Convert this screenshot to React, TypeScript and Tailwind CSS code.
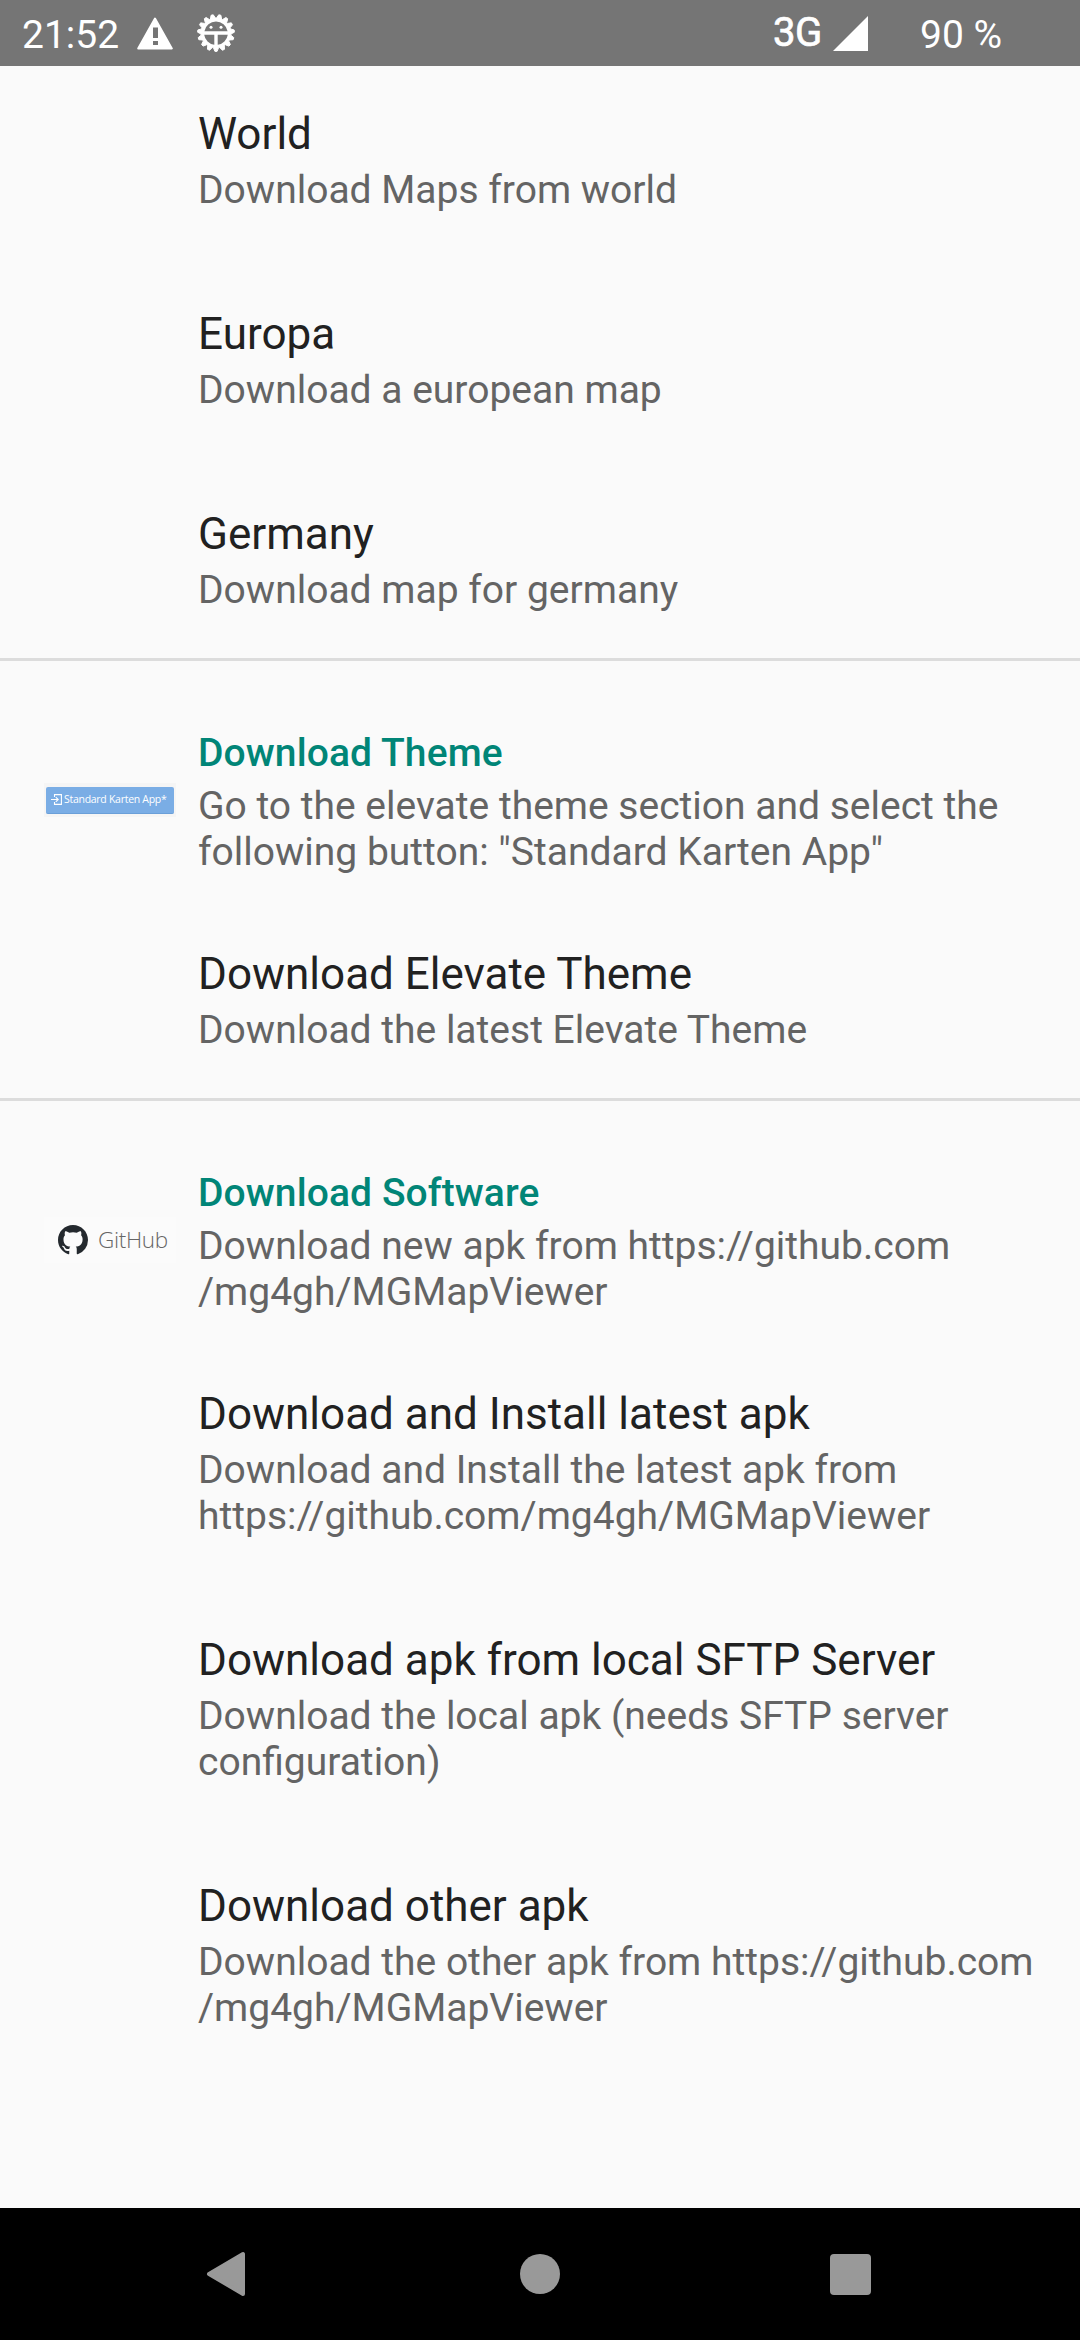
type Entry = { title: string; lines: string[] };

function Preference({ title, lines }: Entry) {
  return (
    <div className="pl-[198px]">
      <div className="h-[52px] whitespace-nowrap text-[44px] leading-[52px] text-[#212121]">{title}</div>
      <Summary lines={lines} />
    </div>
  );
}

function Summary({ lines }: { lines: string[] }) {
  return (
    <div className="mt-[7px] text-[39px] leading-[46px] text-[#646464]">
      {lines.map((l) => (
        <div key={l} className="h-[46px] whitespace-nowrap">{l}</div>
      ))}
    </div>
  );
}

function Header({ title, lines, children }: Entry & { children: React.ReactNode }) {
  return (
    <div className="mt-[69px] mb-[73px] flex h-[145px]">
      <div className="flex w-[198px] shrink-0 items-center pb-[5px] pl-[44px]">{children}</div>
      <div>
        <div className="h-[46px] whitespace-nowrap text-[39px] font-medium leading-[46px] tracking-[0.1px] text-[#018577]">{title}</div>
        <Summary lines={lines} />
      </div>
    </div>
  );
}

const Divider = () => <div className="mt-[45px] h-[3px] bg-[#dcdcdc]" />;

function Gear() {
  const pts: string[] = [];
  const n = 15;
  for (let i = 0; i < n; i++) {
    const a = Math.PI / 2 + (i * 2 * Math.PI) / n;
    const p = (r: number, d: number) => `${(20 + r * Math.cos(a + d)).toFixed(2)},${(20 + r * Math.sin(a + d)).toFixed(2)}`;
    pts.push(p(15, -0.17), p(18.4, -0.06), p(18.4, 0.06), p(15, 0.17));
  }
  return (
    <svg className="ml-[23px] size-[40px]" viewBox="0 0 40 40">
      <polygon points={pts.join(' ')} fill="#fff" stroke="#fff" strokeWidth="1" strokeLinejoin="round" />
      <path d="M8.4 18.2a11.8 11.8 0 0 1 23.2 0z" fill="#757575" />
      <path d="M8.2 21.7H18.3V31.8A11.9 11.9 0 0 1 8.2 21.7zM31.8 21.7H21.7V31.8A11.9 11.9 0 0 0 31.8 21.7z" fill="#757575" />
      <circle cx="15" cy="14.3" r="1.5" fill="#fff" />
      <circle cx="25" cy="14.3" r="1.5" fill="#fff" />
    </svg>
  );
}

export default function App() {
  return (
    <div className="flex h-[2340px] w-[1080px] flex-col overflow-hidden bg-[#fafafa] font-['Roboto',sans-serif]">
      <div className="flex h-[66px] shrink-0 items-center bg-[#757575] pl-[22px] text-white">
        <span className="w-[98px] pt-[4px] text-[39px] leading-[46px]">21:52</span>
        <svg className="ml-[17px] h-[33px] w-[36px]" viewBox="0 0 36 33">
          <path d="M18 1.5L34.8 31.5H1.2z" fill="#fff" stroke="#fff" strokeWidth="2" strokeLinejoin="round" />
          <path d="M16 10.5h5v10.500h-5zM16 24h5v4h-5z" fill="#757575" />
        </svg>
        <Gear />
        <span className="ml-[537px] w-[50px] whitespace-nowrap text-[40px] leading-[46px] tracking-[-0.5px] [-webkit-text-stroke:0.7px_white]">3G</span>
        <svg className="ml-[10px] h-[35px] w-[35px]" viewBox="0 0 34 34"><path d="M34 0V34H0z" fill="#fff" /></svg>
        <span className="ml-[52px] whitespace-nowrap pt-[4px] text-[39px] leading-[46px]">90 %</span>
      </div>

      <main className="flex-1 pt-[42px]">
        <div className="flex flex-col gap-[95px]">
          <Preference title="World" lines={['Download Maps from world']} />
          <Preference title="Europa" lines={['Download a european map']} />
          <Preference title="Germany" lines={['Download map for germany']} />
        </div>
        <Divider />

        <Header title="Download Theme" lines={['Go to the elevate theme section and select the', 'following button: "Standard Karten App"']}>
          <div className="flex h-[34px] w-[132px] items-center justify-center bg-[#f5f5f5]">
            <div className="flex h-[27px] w-[128px] items-center rounded-[2px] border-b border-[#6a9fd8] bg-[#7aade5] pl-[5px] text-white">
              <svg className="size-[11px] shrink-0" viewBox="0 0 11 11" fill="none" stroke="#fff" strokeWidth="1.1">
                <path d="M3.5 3V.6H10.4V10.4H3.5V8M0 5.5H7M4.8 3.2L7.2 5.5L4.8 7.8" />
              </svg>
              <span className="ml-[2px] whitespace-nowrap pt-px font-['Open_Sans',sans-serif] text-[10.5px] font-medium tracking-[-0.28px]">Standard Karten App*</span>
            </div>
          </div>
        </Header>
        <Preference title="Download Elevate Theme" lines={['Download the latest Elevate Theme']} />
        <Divider />

        <Header title="Download Software" lines={['Download new apk from https://github.com', '/mg4gh/MGMapViewer']}>
          <div className="flex h-[46px] w-[132px] items-center bg-[#fbfbfb] pl-[14px]">
            <svg className="size-[30px]" viewBox="0 0 16 16" fill="#24292e">
              <path d="M8 0C3.58 0 0 3.58 0 8c0 3.54 2.29 6.53 5.47 7.59.4.07.55-.17.55-.38 0-.19-.01-.82-.01-1.49-2.01.37-2.53-.49-2.69-.94-.09-.23-.48-.94-.82-1.13-.28-.15-.68-.52-.01-.53.63-.01 1.08.58 1.23.82.72 1.21 1.87.87 2.33.66.07-.52.28-.87.51-1.07-1.78-.2-3.64-.89-3.64-3.95 0-.87.31-1.59.82-2.15-.08-.2-.36-1.02.08-2.12 0 0 .67-.21 2.2.82.64-.18 1.32-.27 2-.27s1.36.09 2 .27c1.53-1.04 2.2-.82 2.2-.82.44 1.1.16 1.92.08 2.12.51.56.82 1.27.82 2.15 0 3.07-1.87 3.75-3.65 3.95.29.25.54.73.54 1.48 0 1.07-.01 1.93-.01 2.2 0 .21.15.46.55.38A8.01 8.01 0 0 0 16 8c0-4.42-3.58-8-8-8z" />
            </svg>
            <span className="ml-[10px] pb-px font-['Open_Sans',sans-serif] text-[22.5px] font-light tracking-[-0.3px] text-[#666]">GitHub</span>
          </div>
        </Header>
        <div className="flex flex-col gap-[95px]">
          <Preference title="Download and Install latest apk" lines={['Download and Install the latest apk from', 'https://github.com/mg4gh/MGMapViewer']} />
          <Preference title="Download apk from local SFTP Server" lines={['Download the local apk (needs SFTP server', 'configuration)']} />
          <Preference title="Download other apk" lines={['Download the other apk from https://github.com', '/mg4gh/MGMapViewer']} />
        </div>
      </main>

      <nav className="flex h-[132px] shrink-0 items-center bg-black pl-[206px]">
        <svg className="h-[46px] w-[40px]" viewBox="0 0 40 46"><path d="M3 23L37 3V43z" fill="#999" stroke="#999" strokeWidth="4" strokeLinejoin="round" /></svg>
        <div className="ml-[274px] size-[40px] rounded-full bg-[#999]" />
        <div className="ml-[270px] size-[41px] rounded-[4px] bg-[#999]" />
      </nav>
    </div>
  );
}
